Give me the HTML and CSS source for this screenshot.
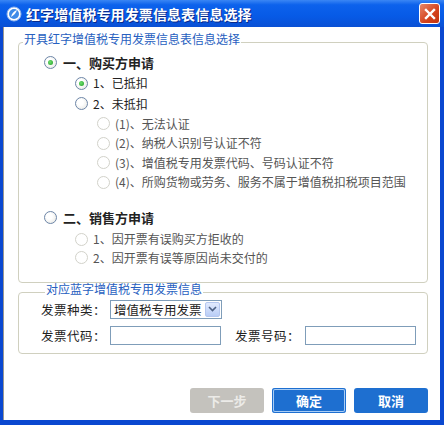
FILE: index.html
```html
<!DOCTYPE html>
<html lang="zh">
<head>
<meta charset="utf-8">
<link rel="stylesheet" href="styles.css">
</head>
<body>
<div class="window">
  <div class="titlebar">
    <svg class="app-icon" width="16" height="16" viewBox="0 0 16 16">
      <circle cx="8" cy="8" r="7" fill="#ffffff" stroke="#8fb4ec" stroke-width="1"/>
      <circle cx="8" cy="8" r="5" fill="#3f8be8"/>
      <path d="M5 11 C6 7 8 5 11 4 C10 7 8 9 5 11 Z" fill="#ffffff"/>
    </svg>
    <span class="title">红字增值税专用发票信息表信息选择</span>
    <div class="close">
      <svg width="12" height="12" viewBox="0 0 12 12"><path d="M2 2 L10 10 M10 2 L2 10" stroke="#fff" stroke-width="2.4" stroke-linecap="square"/></svg>
    </div>
  </div>
  <div class="client">
    <fieldset class="group group-main">
      <legend><span class="legend-text">开具红字增值税专用发票信息表信息选择</span></legend>
      <div class="opt lvl0 bold"><span class="radio checked"></span>一、购买方申请</div>
      <div class="opt lvl1"><span class="radio checked"></span>1、已抵扣</div>
      <div class="opt lvl1"><span class="radio"></span>2、未抵扣</div>
      <div class="opt lvl2 dis"><span class="radio disabled"></span>(1)、无法认证</div>
      <div class="opt lvl2 dis"><span class="radio disabled"></span>(2)、纳税人识别号认证不符</div>
      <div class="opt lvl2 dis"><span class="radio disabled"></span>(3)、增值税专用发票代码、号码认证不符</div>
      <div class="opt lvl2 dis"><span class="radio disabled"></span>(4)、所购货物或劳务、服务不属于增值税扣税项目范围</div>
      <div class="opt lvl0 bold sec2"><span class="radio"></span>二、销售方申请</div>
      <div class="opt lvl1 dis sub2"><span class="radio disabled"></span>1、因开票有误购买方拒收的</div>
      <div class="opt lvl1 dis sub2"><span class="radio disabled"></span>2、因开票有误等原因尚未交付的</div>
    </fieldset>
    <fieldset class="group group-info">
      <legend><span class="legend-text">对应蓝字增值税专用发票信息</span></legend>
      <div class="row">
        <span class="label">发票种类：</span>
        <div class="select"><span>增值税专用发票</span><span class="arrow"><svg width="9" height="6" viewBox="0 0 9 6"><path d="M1 1 L4.5 4.5 L8 1" stroke="#4d6185" stroke-width="1.6" fill="none"/></svg></span></div>
      </div>
      <div class="row">
        <span class="label">发票代码：</span>
        <div class="input"></div>
        <span class="label label2">发票号码：</span>
        <div class="input"></div>
      </div>
    </fieldset>
    <div class="buttons">
      <button class="btn disabled">下一步</button>
      <button class="btn primary focus">确定</button>
      <button class="btn primary">取消</button>
    </div>
  </div>
</div>
</body>
</html>
```
FILE: styles.css
```css
* { box-sizing: border-box; }
html, body { margin: 0; padding: 0; }
body {
  width: 444px; height: 425px; overflow: hidden;
  font-family: "Noto Sans CJK SC", "Noto Sans", sans-serif;
  font-size: 12px; color: #222;
  background: #fff;
}
.window {
  width: 444px; height: 425px;
  display: flex; flex-direction: column;
  background: #0a48d0;
}
.titlebar {
  height: 27px; flex: none;
  display: flex; align-items: center;
  padding: 0 4px 0 6px;
  background: linear-gradient(#3a86f4 0%, #0c62ec 18%, #075ae6 60%, #0a50d4 100%);
  color: #fff;
}
.app-icon { flex: none; margin-right: 4px; }
.title { font-weight: bold; font-size: 14px; letter-spacing: 0.1px; flex: 1; text-shadow: 1px 1px 0 #0a2a8a; }
.close {
  width: 21px; height: 21px;
  border: 1px solid #fff; border-radius: 3px;
  background: linear-gradient(135deg, #e7876a, #d4421c 60%, #c23410);
  display: flex; align-items: center; justify-content: center;
}
.client {
  flex: 1;
  margin: 0 4px 5px 3px;
  background: #fff;
  border-left: 1px solid #9a9890;
  padding: 9px 12px 0 14px;
  display: flex; flex-direction: column;
}
.group {
  margin: 0; padding: 0;
  border: 1px solid #d0d0bf;
  border-radius: 4px;
}
.group legend {
  color: #2760c0;
  padding: 0 1px;
  margin-left: 4px;
  font-size: 12px;
  line-height: 13px;
}
.legend-text { display: inline-block; transform: translateY(-4px); }
.group-main { height: 247px; padding-top: 3px; }
.opt {
  display: flex; align-items: center;
  height: 19.5px;
  line-height: 14px;
}
.opt.bold { font-weight: bold; font-size: 13px; }
.opt.lvl0 { padding-left: 25px; height: 21px; }
.opt.lvl0 .radio { margin-right: 6px; }
.opt.lvl1 { padding-left: 56px; height: 20.5px; }
.opt.lvl2 { padding-left: 78px; }
.opt.sec2 { margin-top: 15px; margin-bottom: 2px; }
.opt.sub2 { height: 18.5px; }
.opt.dis { color: #555; }
.radio {
  width: 13px; height: 13px; border-radius: 50%;
  flex: none;
  margin-right: 5px;
  border: 1px solid #6d86a8;
  background: radial-gradient(circle at 40% 40%, #fff 30%, #e3e3de 100%);
  position: relative;
}
.radio.checked::after {
  content: ""; position: absolute;
  left: 3px; top: 3px; width: 5px; height: 5px; border-radius: 50%;
  background: radial-gradient(circle at 40% 40%, #6ee06e, #1f9a24);
}
.radio.disabled { border-color: #d2d2ca; background: #fff; }
.group-info {
  margin-top: 3px;
  height: 68px;
  padding: 0 0 0 22px;
}
.row { display: flex; align-items: center; height: 20px; margin-bottom: 6px; }
.label { width: 69px; font-size: 12.5px; letter-spacing: 0.5px; }
.label2 { margin-left: 14px; width: 70px; }
.select {
  width: 112px; height: 19px;
  border: 1px solid #7f9db9;
  display: flex; align-items: center; justify-content: space-between;
  padding: 0 1px 0 3px;
  font-size: 12.5px;
}
.select .arrow {
  width: 15px; height: 15px; border-radius: 2px;
  background: linear-gradient(#e1eafe, #b9cdf6);
  border: 1px solid #b5c7ef;
  display: flex; align-items: center; justify-content: center;
}
.input { width: 111px; height: 19px; border: 1px solid #7f9db9; }
.buttons {
  display: flex; justify-content: flex-end;
  gap: 8px;
  margin-top: 34px;
  padding-right: 0;
}
.btn {
  width: 74px; height: 25px;
  font-family: inherit; font-size: 13px; font-weight: bold;
  color: #fff;
  border: none; border-radius: 3px;
  padding: 0;
}
.btn.disabled { background: #c4c2bd; color: #ecebe8; }
.btn.primary { background: #1e6fd0; }
.btn.focus { box-shadow: inset 0 0 0 1px #1e6fd0, inset 0 0 0 2px #a9cdf5; }
```
